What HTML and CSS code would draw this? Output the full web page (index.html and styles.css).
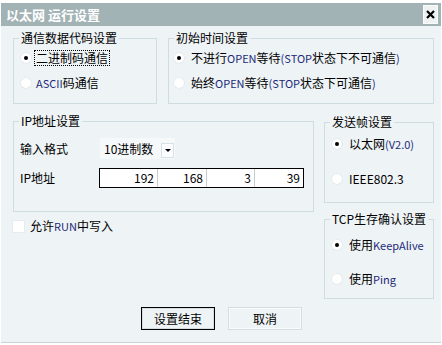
FILE: index.html
```html
<!DOCTYPE html>
<html lang="zh-CN">
<head>
    <meta charset="UTF-8">
    <title>以太网 运行设置</title>
    <link rel="stylesheet" href="styles.css">
</head>
<body>
    <div class="window">
        <div class="titlebar">
            <span class="title">以太网 运行设置</span>
            <span class="close">
                <svg width="9" height="9" viewBox="0 0 9 9"><path d="M1 1 L8 8 M8 1 L1 8" stroke="#000" stroke-width="2.2"/></svg>
            </span>
        </div>

        <div class="content">
            <div class="row-top">
                <div class="group g-code">
                    <span class="legend">通信数据代码设置</span>
                    <div class="item"><span class="radio checked"></span><span class="focus">二进制码通信</span></div>
                    <div class="item"><span class="radio"></span><span><span class="en">ASCII</span>码通信</span></div>
                </div>
                <div class="group g-time">
                    <span class="legend">初始时间设置</span>
                    <div class="item"><span class="radio checked"></span><span>不进行<span class="en">OPEN</span>等待<span class="en">(STOP</span>状态下不可通信<span class="en">)</span></span></div>
                    <div class="item"><span class="radio"></span><span>始终<span class="en">OPEN</span>等待<span class="en">(STOP</span>状态下可通信<span class="en">)</span></span></div>
                </div>
            </div>

            <div class="row-mid">
                <div class="col-left">
                    <div class="group g-ip">
                        <span class="legend">IP地址设置</span>
                        <div class="field">
                            <span class="label">输入格式</span>
                            <div class="select">
                                <span>10进制数</span>
                                <span class="drop"><span class="tri"></span></span>
                            </div>
                        </div>
                        <div class="field">
                            <span class="label">IP地址</span>
                            <div class="ipbox">
                                <span class="seg s1">192</span>
                                <span class="seg s2">168</span>
                                <span class="seg s3">3</span>
                                <span class="seg s4">39</span>
                            </div>
                        </div>
                    </div>
                    <div class="check-row"><span class="checkbox"></span><span>允许<span class="en">RUN</span>中写入</span></div>
                </div>
                <div class="col-right">
                    <div class="group g-frame">
                        <span class="legend">发送帧设置</span>
                        <div class="item"><span class="radio checked"></span><span>以太网<span class="en">(V2.0)</span></span></div>
                        <div class="item"><span class="radio"></span><span>IEEE802.3</span></div>
                    </div>
                    <div class="group g-tcp">
                        <span class="legend">TCP生存确认设置</span>
                        <div class="item"><span class="radio checked"></span><span>使用<span class="en">KeepAlive</span></span></div>
                        <div class="item"><span class="radio"></span><span>使用<span class="en">Ping</span></span></div>
                    </div>
                </div>
            </div>

            <div class="buttons">
                <span class="btn btn-default">设置结束</span>
                <span class="btn">取消</span>
            </div>
        </div>
    </div>
</body>
</html>
```

FILE: styles.css
```css
* {
    margin: 0;
    padding: 0;
    box-sizing: border-box;
}

body {
    background: #fff;
    font-family: "Noto Sans CJK SC", sans-serif;
    font-size: 12px;
    line-height: 16px;
    color: #000;
}

.window {
    margin: 3px 0 0 1px;
    width: 440px;
    height: 340px;
    background: #eef3f6;
    border-bottom: 1px solid #c8d4da;
}

.titlebar {
    height: 23px;
    background: #a2b3b5;
    display: flex;
    align-items: center;
    justify-content: space-between;
    padding: 0 3px 0 5px;
}

.title {
    color: #fff;
    font-weight: bold;
    font-size: 13px;
}

.close {
    width: 15px;
    height: 19px;
    background: #eef2f3;
    border: 1px solid #fafcfc;
    display: flex;
    align-items: center;
    justify-content: center;
}

.content {
    padding: 12px 0 0 12px;
}

.en {
    color: #1c2a78;
    font-size: 11px;
}

/* group boxes */
.group {
    position: relative;
    border: 1px solid #cfdce2;
    display: flex;
    flex-direction: column;
}

.legend {
    position: absolute;
    top: -8px;
    left: 5px;
    padding: 0 2px;
    line-height: 14px;
    background: #eef3f6;
    white-space: nowrap;
}

.item {
    display: flex;
    align-items: center;
    height: 16px;
    white-space: nowrap;
}

.radio {
    width: 12px;
    height: 12px;
    border-radius: 50%;
    background: #fff;
    box-shadow: inset 0 0 0 1px #e2e9ec;
    display: flex;
    align-items: center;
    justify-content: center;
    flex-shrink: 0;
}

.radio.checked::after {
    content: "";
    width: 4px;
    height: 4px;
    border-radius: 50%;
    background: #000;
}

.row-top {
    display: flex;
    gap: 11px;
}

.g-code {
    width: 144px;
    height: 66px;
    padding: 11px 0 0 6px;
    gap: 9px;
}

.g-code .item {
    gap: 4px;
}

.focus {
    border: 1px dotted #000;
    padding: 0 1px;
    margin-left: -2px;
    line-height: 14px;
}

.g-time {
    width: 266px;
    height: 66px;
    padding: 11px 0 0 4px;
    gap: 9px;
}

.g-time .item {
    gap: 6px;
}

.row-mid {
    display: flex;
    gap: 10px;
    margin-top: 17px;
}

.g-ip {
    width: 301px;
    height: 91px;
    padding: 16px 0 0 6px;
    gap: 9px;
}

.field {
    display: flex;
    align-items: center;
}

.label {
    width: 79px;
}

.select {
    width: 75px;
    height: 21px;
    margin-left: 1px;
    background: #f6f9fa;
    display: flex;
    align-items: center;
    justify-content: space-between;
    padding: 0 1px 0 4px;
}

.drop {
    width: 13px;
    height: 15px;
    margin-top: 4px;
    background: #fbfcfd;
    border: 1px solid #d8e1e5;
    display: flex;
    align-items: center;
    justify-content: center;
}

.tri {
    border-left: 3px solid transparent;
    border-right: 3px solid transparent;
    border-top: 3px solid #000;
}

.ipbox {
    width: 205px;
    height: 20px;
    border: 1px solid #000;
    background: #fff;
    display: flex;
}

.seg {
    text-align: right;
    padding-right: 3px;
    line-height: 18px;
}

.s1 { width: 57px; }
.s2 { width: 49px; }
.s3 { width: 48px; }
.s4 { flex: 1; }

.s2, .s3, .s4 {
    border-left: 1px solid #c8cccf;
}

.check-row {
    display: flex;
    align-items: center;
    gap: 5px;
    margin: 6px 0 0 -1px;
}

.checkbox {
    width: 13px;
    height: 13px;
    background: #fff;
    box-shadow: inset 0 0 0 1px #e6ecee;
}

.col-right {
    margin-top: 1px;
}

.g-frame {
    width: 110px;
    height: 81px;
    padding: 13px 0 0 6px;
    gap: 19px;
}

.g-tcp {
    width: 110px;
    height: 80px;
    margin-top: 16px;
    padding: 17px 0 0 6px;
    gap: 18px;
}

.g-frame .item,
.g-tcp .item {
    gap: 6px;
}

.buttons {
    display: flex;
    gap: 13px;
    margin-top: 8px;
    padding-left: 128px;
}

.btn {
    width: 74px;
    height: 23px;
    display: flex;
    align-items: center;
    justify-content: center;
    border: 1px solid #d3dde2;
    box-shadow: inset 0 0 0 1px #f8fafb;
}

.btn-default {
    border: 1px solid #000;
    box-shadow: inset 0 0 0 1px #d3dde2;
}
```
